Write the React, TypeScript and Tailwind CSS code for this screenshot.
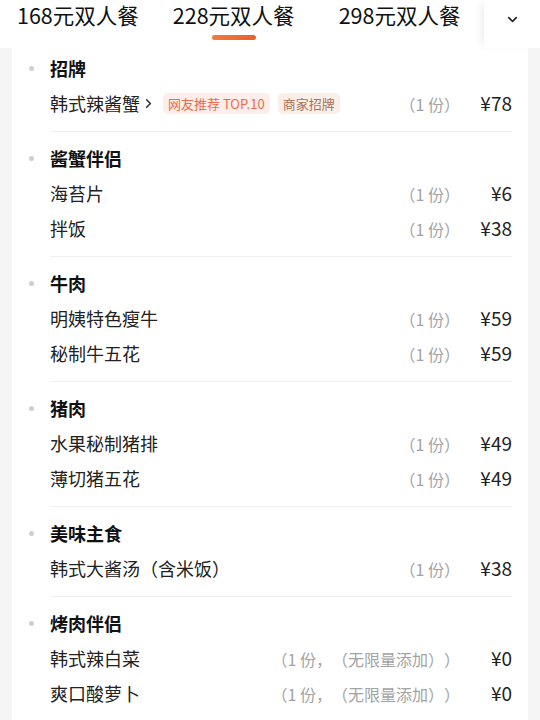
import { ChevronDown, ChevronRight } from "lucide-react";

type Item = {
  name: string;
  qty: string;
  price: string;
  link?: boolean;
  badges?: { text: string; tone: "red" | "brown" }[];
};

type Section = { title: string; items: Item[] };

const tabs = ["168元双人餐", "228元双人餐", "298元双人餐"];

const sections: Section[] = [
  {
    title: "招牌",
    items: [
      {
        name: "韩式辣酱蟹",
        qty: "（1 份）",
        price: "¥78",
        link: true,
        badges: [
          { text: "网友推荐 TOP.10", tone: "red" },
          { text: "商家招牌", tone: "brown" },
        ],
      },
    ],
  },
  {
    title: "酱蟹伴侣",
    items: [
      { name: "海苔片", qty: "（1 份）", price: "¥6" },
      { name: "拌饭", qty: "（1 份）", price: "¥38" },
    ],
  },
  {
    title: "牛肉",
    items: [
      { name: "明姨特色瘦牛", qty: "（1 份）", price: "¥59" },
      { name: "秘制牛五花", qty: "（1 份）", price: "¥59" },
    ],
  },
  {
    title: "猪肉",
    items: [
      { name: "水果秘制猪排", qty: "（1 份）", price: "¥49" },
      { name: "薄切猪五花", qty: "（1 份）", price: "¥49" },
    ],
  },
  {
    title: "美味主食",
    items: [{ name: "韩式大酱汤（含米饭）", qty: "（1 份）", price: "¥38" }],
  },
  {
    title: "烤肉伴侣",
    items: [
      { name: "韩式辣白菜", qty: "（1 份，（无限量添加））", price: "¥0" },
      { name: "爽口酸萝卜", qty: "（1 份，（无限量添加））", price: "¥0" },
      { name: "蔬菜沙拉", qty: "（1 份，（无限量添加））", price: "¥0" },
    ],
  },
];

function ItemRow({ item }: { item: Item }) {
  return (
    <div className="flex h-[35px] items-center">
      <span className="text-[18px] text-[#222]">{item.name}</span>
      {item.link && (
        <ChevronRight className="ml-[1px] h-[15px] w-[15px] text-[#333]" strokeWidth={2.5} />
      )}
      {item.badges?.map((b) => (
        <span
          key={b.text}
          className={
            b.tone === "red"
              ? "ml-[7px] rounded-[5px] bg-[#fdeee9] px-[5px] text-[13px] leading-[21px] text-[#ec6a4c]"
              : "ml-[8px] rounded-[5px] bg-[#fbeee6] px-[5px] text-[13px] leading-[21px] text-[#a8725a]"
          }
        >
          {b.text}
        </span>
      ))}
      <span className="ml-auto text-[16px] text-[#a3a3a3]">{item.qty}</span>
      <span className="w-[52px] text-right text-[19px] text-[#222]">{item.price}</span>
    </div>
  );
}

export default function App() {
  return (
    <div
      className="relative h-[720px] w-[540px] overflow-hidden bg-[#f5f5f5] [text-spacing-trim:space-all]"
      style={{ fontFamily: '"Noto Sans CJK SC", "Noto Sans", sans-serif' }}
    >
      {/* Tab bar */}
      <div className="relative flex h-12 bg-white">
        <div className="flex items-start">
          {tabs.map((t, i) => (
            <div
              key={t}
              className={`relative text-[21.5px] leading-[30px] text-[#111] ${
                i === 0 ? "ml-[17px]" : i === 1 ? "ml-[34px]" : "ml-[44px]"
              }`}
            >
              {t}
              {i === 1 && (
                <div className="absolute left-1/2 top-[35px] h-[5px] w-[44px] -translate-x-1/2 rounded-full bg-gradient-to-r from-[#f27a40] to-[#e8602c]" />
              )}
            </div>
          ))}
        </div>
        <div className="absolute right-0 top-0 flex h-12 w-[56px] justify-center bg-white pt-[12px] shadow-[-6px_0_8px_-4px_rgba(0,0,0,0.08)]">
          <ChevronDown className="h-[15px] w-[15px] text-[#222]" strokeWidth={2.5} />
        </div>
      </div>

      {/* Menu card */}
      <div className="mx-3 bg-white pr-4 pt-[3px]">
        {sections.map((s, idx) => (
          <div key={s.title} className={`flex ${idx === 0 ? "" : "pt-[9px]"}`}>
            <div className="flex w-[38px] justify-center pl-[1px] pt-[15px]">
              <span className="h-[5px] w-[5px] rounded-full bg-[#cfcfcf]" />
            </div>
            <div className="flex-1 border-b border-[#efefef] pb-[10px]">
              <div className="flex h-[35px] items-center text-[18px] font-semibold text-[#111]">
                {s.title}
              </div>
              {s.items.map((it) => (
                <ItemRow key={it.name} item={it} />
              ))}
            </div>
          </div>
        ))}
      </div>
    </div>
  );
}
